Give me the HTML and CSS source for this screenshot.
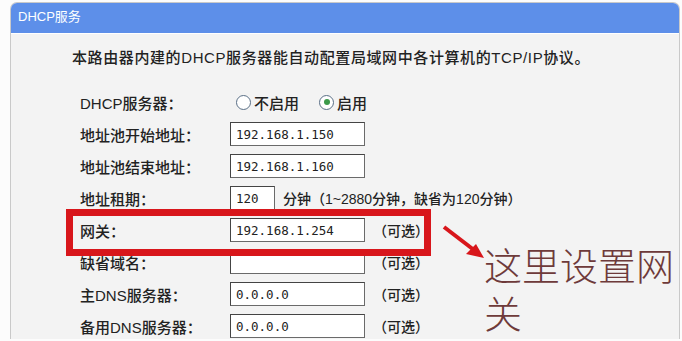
FILE: index.html
```html
<!DOCTYPE html>
<html lang="zh-CN">
<head>
    <meta charset="UTF-8">
    <meta name="viewport" content="width=device-width, initial-scale=1.0">
    <title>DHCP服务</title>
    <link rel="stylesheet" href="styles.css">
</head>
<body>

    <div class="panel">
        <div class="panel-head">DHCP服务</div>
        <div class="panel-body">
            <p class="desc">本路由器内建的DHCP服务器能自动配置局域网中各计算机的TCP/IP协议。</p>

            <div class="form">
                <div class="row">
                    <label>DHCP服务器：</label>
                    <span class="radio-item"><span class="radio"></span>不启用</span>
                    <span class="radio-item"><span class="radio checked"></span>启用</span>
                </div>
                <div class="row">
                    <label>地址池开始地址：</label>
                    <input type="text" value="192.168.1.150">
                </div>
                <div class="row">
                    <label>地址池结束地址：</label>
                    <input type="text" value="192.168.1.160">
                </div>
                <div class="row">
                    <label>地址租期：</label>
                    <input type="text" class="short" value="120">
                    <span class="note">分钟（1~2880分钟，缺省为120分钟）</span>
                </div>
                <div class="row">
                    <label>网关：</label>
                    <input type="text" value="192.168.1.254">
                    <span class="note">（可选）</span>
                </div>
                <div class="row">
                    <label>缺省域名：</label>
                    <input type="text" value="">
                    <span class="note">（可选）</span>
                </div>
                <div class="row">
                    <label>主DNS服务器：</label>
                    <input type="text" value="0.0.0.0">
                    <span class="note">（可选）</span>
                </div>
                <div class="row">
                    <label>备用DNS服务器：</label>
                    <input type="text" value="0.0.0.0">
                    <span class="note">（可选）</span>
                </div>
            </div>
        </div>
    </div>

    <!-- annotation drawn over the screenshot -->
    <div class="mark-box"></div>
    <svg class="mark-arrow" width="56" height="44" viewBox="0 0 56 44">
        <line x1="6" y1="5" x2="36" y2="28" stroke="#d8161b" stroke-width="4"/>
        <polygon points="46,36 28,32 38,22" fill="#d8161b"/>
    </svg>
    <div class="mark-text">这里设置网关</div>

</body>
</html>
```

FILE: styles.css
```css
body {
    margin: 0;
    padding: 0;
    background-color: #fcfcfc;
    font-family: "Liberation Sans", "Noto Sans CJK SC", sans-serif;
    color: #222;
    overflow: hidden;
}
.panel {
    margin: 2px 0 0 10px;
    width: 668px;
    height: 336px;
    background: #f3f3f3;
    border: 1px solid #c9c9c9;
    border-bottom: none;
    border-radius: 7px 7px 0 0;
    overflow: hidden;
}
.panel-head {
    height: 30px;
    line-height: 28px;
    padding-left: 7px;
    background-color: #5d8fe9;
    border-bottom: 1px solid #ffffff;
    color: #fff;
    font-size: 13px;
}
.panel-body {
    padding: 14px 0 0 61px;
}
.desc {
    margin: 0;
    font-size: 15px;
    line-height: 20px;
    letter-spacing: 0.6px;
    font-weight: 500;
}
.form {
    margin: 18px 0 0 8px;
}
.row {
    display: flex;
    align-items: center;
    height: 32px;
    gap: 8px;
    font-size: 15px;
    font-weight: 500;
}
.row label {
    width: 142px;
    flex: none;
}
input {
    width: 135px;
    height: 24px;
    box-sizing: border-box;
    padding: 0 5px;
    margin: 0;
    border: 1px solid #6a6a6a;
    border-top-color: #444;
    border-left-color: #444;
    background: #fff;
    font-family: "DejaVu Sans Mono", monospace;
    font-size: 12.5px;
    color: #222;
}
input.short {
    width: 45px;
}
.note {
    font-size: 14px;
}
.radio-item {
    display: flex;
    align-items: center;
    gap: 3px;
    margin-right: 12px;
}
.radio-item:first-of-type {
    margin-left: 6px;
}
.radio {
    width: 13px;
    height: 13px;
    border: 1px solid #5a6f86;
    border-radius: 50%;
    background: #fff;
    position: relative;
}
.radio.checked::after {
    content: "";
    position: absolute;
    left: 3.5px;
    top: 3.5px;
    width: 6px;
    height: 6px;
    border-radius: 50%;
    background: #3c9a4a;
}
.mark-box {
    position: absolute;
    left: 66px;
    top: 209px;
    width: 365px;
    height: 47px;
    box-sizing: border-box;
    border: 7px solid #d8161b;
}
.mark-arrow {
    position: absolute;
    left: 438px;
    top: 222px;
}
.mark-text {
    position: absolute;
    left: 484px;
    top: 240px;
    width: 195px;
    font-family: "Noto Sans CJK SC", sans-serif;
    font-size: 38px;
    line-height: 48px;
    font-weight: 300;
    color: #6e3a3a;
}
```
